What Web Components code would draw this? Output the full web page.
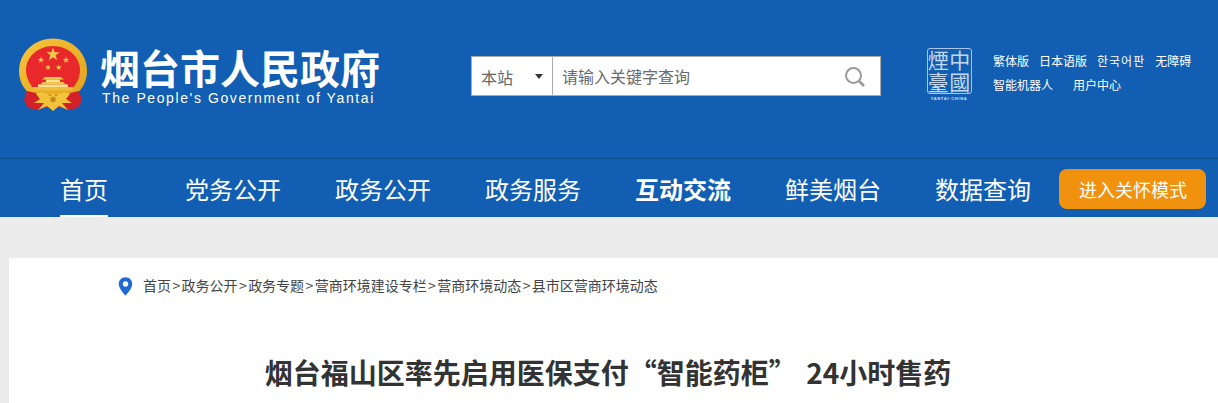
<!DOCTYPE html>
<html lang="zh">
<head>
<meta charset="utf-8">
<title>烟台市人民政府</title>
<style>
html,body{margin:0;padding:0;height:403px;overflow:hidden;background:#ececec;font-family:"Noto Sans CJK SC","Liberation Sans",sans-serif;}
</style>
</head>
<body>
<gov-header></gov-header>
<gov-nav>
  <nav-item active>首页</nav-item>
  <nav-item>党务公开</nav-item>
  <nav-item>政务公开</nav-item>
  <nav-item>政务服务</nav-item>
  <nav-item bold>互动交流</nav-item>
  <nav-item>鲜美烟台</nav-item>
  <nav-item>数据查询</nav-item>
</gov-nav>
<gov-page>
  <gov-crumbs path="首页>政务公开>政务专题>营商环境建设专栏>营商环境动态>县市区营商环境动态"></gov-crumbs>
  <article-title>烟台福山区率先启用医保支付“智能药柜” 24小时售药</article-title>
</gov-page>

<script>
'use strict';

customElements.define('gov-emblem', class extends HTMLElement {
  constructor() {
    super();
    const star = (cx, cy, r) => {
      let p = [];
      for (let i = 0; i < 10; i++) {
        let a = -Math.PI / 2 + i * Math.PI / 5, q = i % 2 ? r * 0.4 : r;
        p.push((cx + q * Math.cos(a)).toFixed(2) + ',' + (cy + q * Math.sin(a)).toFixed(2));
      }
      return `<polygon points="${p.join(' ')}" fill="#f4c84a"/>`;
    };
    this.attachShadow({ mode: 'open' }).innerHTML = `
<style>:host{display:block;width:72px;height:76px;flex:none}svg{display:block}</style>
<svg width="72" height="76" viewBox="17 37 72 76">
  <defs>
    <linearGradient id="gold" x1="0" y1="0" x2="1" y2="1"><stop offset="0" stop-color="#f6c63a"/><stop offset="1" stop-color="#e3a21e"/></linearGradient>
  </defs>
  <path d="M29 82 C27 90 27 100 28 106 L38 108 L68 108 L78 106 C79 100 79 90 77 82 Z" fill="#d3202a"/>
  <path d="M53 38.5 C72 38.5 87 53 87 71 C87 81 82 90 75 95 L31 95 C24 90 19 81 19 71 C19 53 34 38.5 53 38.5 Z" fill="url(#gold)"/>
  <path d="M53 46 C68 46 80 57 80 70 C80 78 76 85 71 90 L35 90 C30 85 26 78 26 70 C26 57 38 46 53 46 Z" fill="#e8282a"/>
  ${star(53, 54.5, 7)}${star(41, 60, 3.4)}${star(66, 60, 3.4)}${star(48, 67.5, 3.2)}${star(58.7, 67.5, 3.2)}
  <path d="M45 77 H61 L64 79.5 H42 Z" fill="#f4c84a"/>
  <rect x="46" y="79.5" width="14" height="2.5" fill="#fbe48e"/>
  <path d="M43 82 H63 L66 84.5 H40 Z" fill="#f4c84a"/>
  <rect x="38" y="84.5" width="30" height="2.5" fill="#fbe48e"/>
  <rect x="33" y="87" width="40" height="3.5" fill="#f0bc3a"/>
  <path d="M27 91 L24 100 L28 108 L40 110 L46 103 L36 93 Z" fill="#d3202a"/>
  <path d="M79 91 L82 100 L78 108 L66 110 L60 103 L70 93 Z" fill="#d3202a"/>
  <path d="M36 94 C41 91 47 93 50 96 L53 93 L56 96 C59 93 65 91 70 94 L66 99 L72 103 L62 103 L68 110 L59 106 L53 111 L47 106 L38 110 L44 103 L34 103 L40 99 Z" fill="#f2c23a"/>
  <circle cx="53" cy="99.5" r="2.8" fill="#c98a1c"/>
</svg>`;
  }
});

customElements.define('gov-search', class extends HTMLElement {
  constructor() {
    super();
    this.attachShadow({ mode: 'open' }).innerHTML = `
<style>
:host{display:flex;width:410px;height:40px;box-sizing:border-box;background:#fff;border:1px solid #aaa;flex:none;color:#666;font-size:16px;line-height:38px}
.scope{width:81px;box-sizing:border-box;border-right:1px solid #aaa;padding-left:9px;position:relative;color:#666;flex:none}
.scope span{position:relative;top:1px}
.scope i{position:absolute;left:63px;top:17px;border:4px solid transparent;border-top:5px solid #333;border-bottom:0}
.q{flex:1;padding-left:9px;color:#6b6b6b}
svg{margin:9px 14px 0 0;flex:none}
</style>
<div class="scope"><span>本站</span><i></i></div>
<div class="q">请输入关键字查询</div>
<svg width="22" height="22" viewBox="0 0 22 22" fill="none" stroke="#9a9a9a"><circle cx="9.5" cy="9.5" r="7.5" stroke-width="2"/><path d="M15 15 L20 20" stroke-width="2.6"/></svg>`;
  }
});

customElements.define('gov-seal', class extends HTMLElement {
  constructor() {
    super();
    this.attachShadow({ mode: 'open' }).innerHTML = `
<style>
:host{display:flex;flex-direction:column;align-items:center;width:46px;flex:none;color:#c3d8f1}
.box{width:45px;height:46px;box-sizing:border-box;border:1.5px solid #a9c6e8;border-radius:3px;display:grid;grid-template-columns:1fr 1fr;grid-template-rows:1fr 1fr;font-size:21px;line-height:21px;text-align:center}
.box span{display:block;height:21px}
small{font:bold 4px/6px "Liberation Sans",sans-serif;letter-spacing:.7px;margin-top:2px;white-space:nowrap;color:#d5e4f5}
</style>
<div class="box"><span>煙</span><span>中</span><span>臺</span><span>國</span></div>
<small>YANTAI·CHINA</small>`;
  }
});

customElements.define('gov-links', class extends HTMLElement {
  constructor() {
    super();
    this.attachShadow({ mode: 'open' }).innerHTML = `
<style>
:host{display:flex;flex-direction:column;gap:6px;color:#fff;font-size:12px;line-height:18px;white-space:nowrap}
div{display:flex;gap:10px}
.wide{gap:20px}
.ko{letter-spacing:1px}
</style>
<div><span>繁体版</span><span>日本语版</span><span class="ko">한국어판</span><span>无障碍</span></div>
<div class="wide"><span>智能机器人</span><span>用户中心</span></div>`;
  }
});

customElements.define('gov-header', class extends HTMLElement {
  constructor() {
    super();
    this.attachShadow({ mode: 'open' }).innerHTML = `
<style>
:host{display:block;background:#115eb2;color:#fff}
.top{box-sizing:border-box;border-bottom:1px solid #0d4c8c;height:159px;display:flex;align-items:flex-start}
.logo{display:flex;width:471px;flex:none;box-sizing:border-box;padding:37px 0 0 17px}
.names{margin-left:11px;padding-top:7px}
.cn{font-size:40px;line-height:46px;font-weight:700;white-space:nowrap}
.en{font:14px/16px "Liberation Sans",sans-serif;letter-spacing:1.6px;margin:0 0 0 2px;white-space:nowrap}
gov-search{margin-top:56px}
gov-seal{margin:48px 0 0 45px}
gov-links{margin:52px 0 0 21px}
</style>
<div class="top">
  <div class="logo">
    <gov-emblem></gov-emblem>
    <div class="names">
      <div class="cn">烟台市人民政府</div>
      <div class="en">The People's Government of Yantai</div>
    </div>
  </div>
  <gov-search></gov-search>
  <gov-seal></gov-seal>
  <gov-links></gov-links>
</div>`;
  }
});

customElements.define('nav-item', class extends HTMLElement {
  constructor() {
    super();
    this.attachShadow({ mode: 'open' }).innerHTML = `
<style>
:host{display:block;height:58px;box-sizing:border-box;font-size:24px;line-height:60px;color:#fff;white-space:nowrap;flex:none}
:host([bold]){font-weight:700}
:host([active]){border-bottom:2px solid #fff;margin-right:23px}
</style>
<slot></slot>`;
  }
});

customElements.define('gov-nav', class extends HTMLElement {
  constructor() {
    super();
    this.attachShadow({ mode: 'open' }).innerHTML = `
<style>
:host{display:flex;height:58px;background:#115eb2;padding-left:60px;box-sizing:border-box}
.items{display:flex;gap:54px;flex:none}
.care{margin:10px 0 0 28px;width:147px;height:40px;padding-left:1px;box-sizing:border-box;background:#f0920e;border-radius:8px;color:#fff;font-size:18px;line-height:40px;text-align:center;flex:none}
</style>
<div class="items"><slot></slot></div>
<div class="care">进入关怀模式</div>`;
  }
});

customElements.define('gov-page', class extends HTMLElement {
  constructor() {
    super();
    this.attachShadow({ mode: 'open' }).innerHTML = `
<style>
:host{display:block;margin:41px 0 0 9px;background:#fff;height:145px;overflow:hidden}
</style>
<slot></slot>`;
  }
});

customElements.define('gov-crumbs', class extends HTMLElement {
  constructor() {
    super();
    let parts = (this.getAttribute('path') || '').split('>');
    this.attachShadow({ mode: 'open' }).innerHTML = `
<style>
:host{display:flex;align-items:flex-start;padding:17px 0 0 109px;font-size:14px;line-height:20px;color:#444;white-space:nowrap}
svg{margin:2px 10px 0 0;flex:none}
b{font-weight:400;padding:0 1.4px}
</style>
<svg width="15" height="19" viewBox="0 0 15 19"><path fill-rule="evenodd" d="M7.5 0.3 C3.5 0.3 0.8 3.2 0.8 6.9 C0.8 11 5 15.5 7.5 18.7 C10 15.5 14.2 11 14.2 6.9 C14.2 3.2 11.5 0.3 7.5 0.3 Z M7.5 4.3 A2.7 2.7 0 1 1 7.5 9.7 A2.7 2.7 0 1 1 7.5 4.3 Z" fill="#1f6bd0"/></svg>
<span>${parts.join('<b>&gt;</b>')}</span>`;
  }
});

customElements.define('article-title', class extends HTMLElement {
  constructor() {
    super();
    this.attachShadow({ mode: 'open' }).innerHTML = `
<style>
:host{display:block;margin-top:56px;padding-right:11px;text-align:center;font-size:28px;line-height:40px;font-weight:700;color:#333;white-space:nowrap;word-spacing:3px}
</style>
<slot></slot>`;
  }
});
</script>
</body>
</html>
